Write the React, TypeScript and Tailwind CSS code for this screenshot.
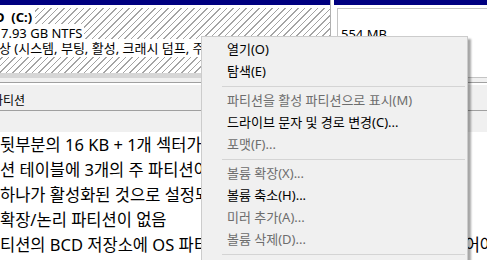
import React from 'react';

type MenuEntry = { label: string; enabled: boolean } | 'sep';

const menu: MenuEntry[] = [
    { label: '열기(O)', enabled: true },
    { label: '탐색(E)', enabled: true },
    'sep',
    { label: '파티션을 활성 파티션으로 표시(M)', enabled: false },
    { label: '드라이브 문자 및 경로 변경(C)...', enabled: true },
    { label: '포맷(F)...', enabled: false },
    'sep',
    { label: '볼륨 확장(X)...', enabled: false },
    { label: '볼륨 축소(H)...', enabled: true },
    { label: '미러 추가(A)...', enabled: false },
    { label: '볼륨 삭제(D)...', enabled: false },
    'sep',
    { label: '속성(P)', enabled: true },
];

const bodyLines = [
    '뒷부분의 16 KB + 1개 섹터가 비어 있어야',
    '션 테이블에 3개의 주 파티션이 있어야 함',
    '하나가 활성화된 것으로 설정되어 있어야',
    '확장/논리 파티션이 없음',
    '티션의 BCD 저장소에 OS 파티션 정보가 부팅관리자에 반드시들어있어야 합니다',
];

const ContextMenu: React.FC = () => (
    <div className="absolute left-[201px] top-[36px] w-[267px] bg-[#f0f0f0] border border-[#cccccc] pt-[2px] shadow-[3px_3px_2px_rgba(0,0,0,0.35)] text-[13px]">
        {menu.map((m, i) =>
            m === 'sep' ? (
                <div key={i} className="h-[7px] flex items-center pl-[20px] pr-[2px]">
                    <div className="h-px w-full bg-[#d4d4d4]" />
                </div>
            ) : (
                <div
                    key={i}
                    className={`h-[22px] flex items-center pl-[25px] whitespace-nowrap ${m.enabled ? 'text-black' : 'text-[#6d6d6d]'}`}
                >
                    {m.label}
                </div>
            )
        )}
    </div>
);

export default function App() {
    return (
        <div className="relative w-[487px] h-[260px] overflow-hidden bg-white font-['Noto_Sans','Noto_Sans_CJK_KR',sans-serif] text-black">
            {/* disk row */}
            <div className="flex h-[78px]">
                <div className="w-[331px] flex flex-col border-r border-[#b0b0b0]">
                    <div className="h-[5px] bg-[#000080]" />
                    <div className="h-[3px] bg-white" />
                    <div className="h-[65px] overflow-hidden bg-[image:repeating-linear-gradient(135deg,#ffffff_0px,#ffffff_3.6px,#a4a4a4_3.6px,#a4a4a4_4.6px)] pt-[2px] text-[13px] leading-[15.5px] whitespace-nowrap">
                        <div><span className="bg-white font-bold ml-[-5px] pr-[3px]">D&nbsp;&nbsp;(C:)</span></div>
                        <div><span className="bg-white pl-[1px] pr-[2px]">7.93 GB NTFS</span></div>
                        <div><span className="bg-white ml-[-13px] pr-[2px]">정상 (시스템, 부팅, 활성, 크래시 덤프, 주 파티션)</span></div>
                    </div>
                    <div className="flex-1 bg-[#d6d6d6]" />
                </div>
                <div className="w-[3px] bg-white" />
                <div className="flex-1 flex flex-col">
                    <div className="h-[5px] bg-[#000080]" />
                    <div className="flex-1 bg-white pt-[3px] pl-[3px]">
                        <div className="h-full border border-r-0 border-[#c4c4c4] pl-[3px] pt-[2px] text-[13px] leading-[15.5px] whitespace-nowrap">
                            <div>&nbsp;</div>
                            <div>554 MB</div>
                            <div>정상 (복구 파티션)</div>
                        </div>
                    </div>
                </div>
            </div>

            {/* legend bar */}
            <div className="h-[4px] bg-[#f0f0f0]" />
            <div className="h-px bg-[#a0a0a0]" />
            <div className="h-[2px] bg-white" />
            <div className="h-[25px] bg-[#f0f0f0] flex items-center pt-[7px] text-[12px] whitespace-nowrap">
                <span className="ml-[-8px]">파티션</span>
            </div>
            <div className="h-px bg-[#a0a0a0]" />
            <div className="h-[22px] bg-[#f0f0f0]" />
            <div className="h-[5px] bg-gradient-to-b from-[#9a9a9a] to-[#e6e6e6]" />

            {/* body text */}
            <div className="bg-white -mt-[6px] text-[16.5px] leading-[25px] whitespace-nowrap">
                {bodyLines.map(l => (
                    <div key={l}>{l}</div>
                ))}
            </div>

            <ContextMenu />
        </div>
    );
}
